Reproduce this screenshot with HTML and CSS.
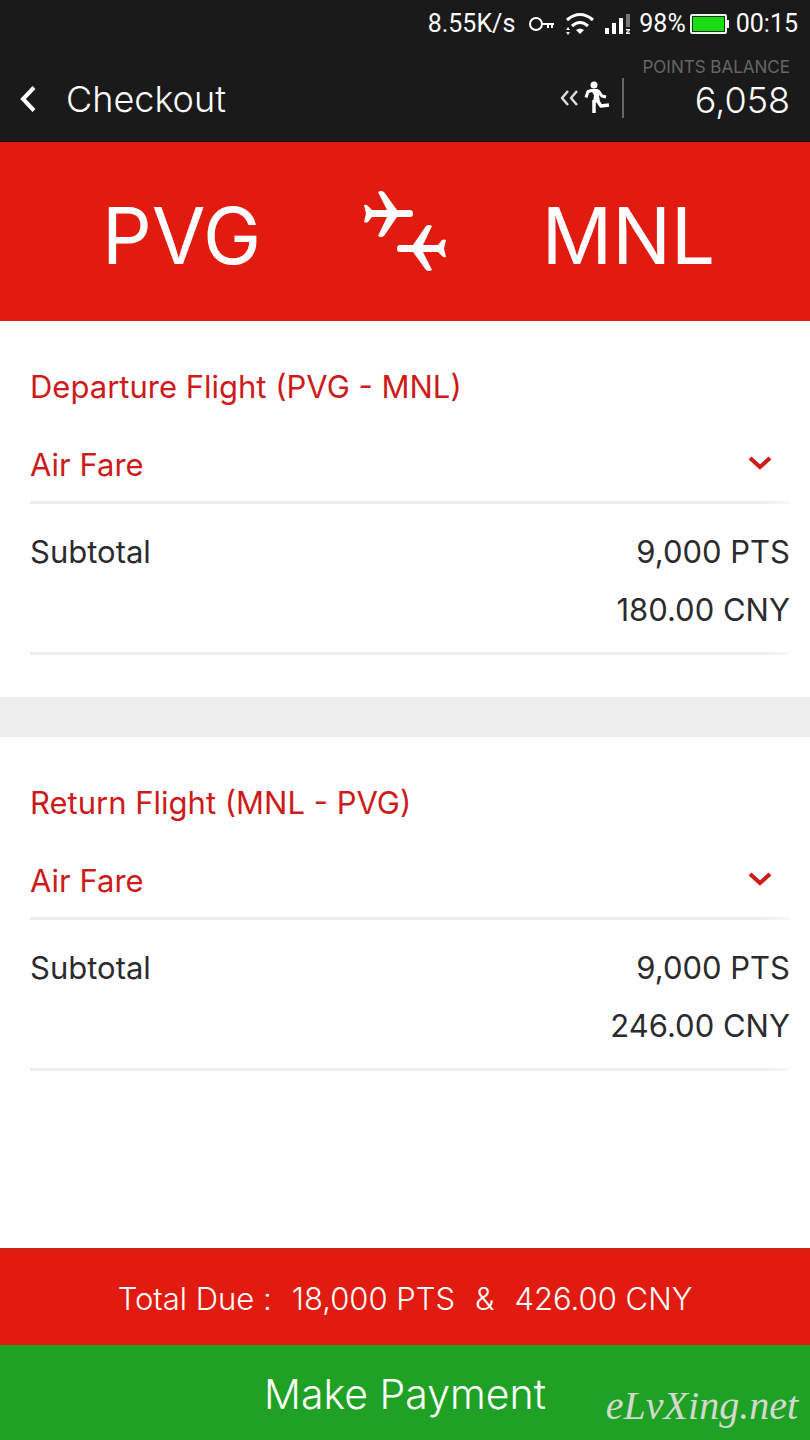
FILE: index.html
```html
<!DOCTYPE html>
<html lang="en">
<head>
<meta charset="utf-8">
<meta name="viewport" content="width=device-width, initial-scale=1">
<title>Checkout</title>
<link rel="stylesheet" href="styles.css">
</head>
<body>
<div class="status-bar">
  <span class="status-speed">8.55K/s</span>
  <svg width="26" height="16" viewBox="0 0 26 16" fill="none" stroke="#fff" stroke-width="2" aria-hidden="true"><circle cx="7" cy="8" r="6"/><path d="M13 8h12M19 8v4M23 8v4"/></svg>
  <svg class="status-wifi" width="30" height="24" viewBox="0 0 30 24" fill="none" stroke="#fff" stroke-width="3" aria-hidden="true"><path d="M2 8Q15-3 28 8"/><path d="M7 14Q15 7 23 14"/><path d="M11 18Q15 15 19 18L15 22z" fill="#fff" stroke="none"/><path d="M1 18l2-3 2 3zM1 20h4l-2 3z" fill="#fff" stroke="none"/></svg>
  <svg class="status-signal" width="26" height="22" viewBox="0 0 26 22" fill="#fff" aria-hidden="true"><path d="M0 15h4v6H0zM7 10h4v11H7zM14 5h4v16h-4z"/><path d="M21 1h4v13h-4z" fill="#777"/><path d="M21 16h4v1.500l-2.500 2H25V21h-4v-1.500l2.500-2H21z"/></svg>
  <span class="status-level">98%</span>
  <svg width="40" height="20" viewBox="0 0 40 20" aria-hidden="true"><rect x="1" y="1" width="35" height="18" rx="1" fill="#15300f" stroke="#e9f5e9" stroke-width="2"/><rect x="3" y="3" width="31" height="14" fill="#1bdc14"/><path d="M37 6h2v8h-2z" fill="#e9f5e9"/></svg>
  <span class="status-time">00:15</span>
</div>
<header class="app-bar">
  <button class="back" type="button" aria-label="Back"><svg width="16" height="26" viewBox="0 0 16 26" fill="none" stroke="#fff" stroke-width="4"><path d="M14 1.500L3 13l11 11.500"/></svg></button>
  <h1 class="title">Checkout</h1>
  <svg class="runner" width="50" height="34" viewBox="0 0 50 34" fill="none" stroke="#fff" stroke-linejoin="round" aria-hidden="true"><path d="M8 10l-6 7 6 7M17 10l-6 7 6 7" stroke-width="2.500" stroke="#ddd"/><circle cx="34" cy="4" r="3.500" fill="#fff" stroke="none"/><path d="M30 8h8l3 3-2 4 1 6-7 1 1-8z" fill="#fff" stroke="none"/><path d="M32 9.500l-4 1-2 6M38 10l4 5 4 1" stroke-width="3"/><path d="M34 19v13M37 19l4 6 8-1" stroke-width="3.500"/></svg>
  <div class="balance">
    <span class="balance-label">POINTS BALANCE</span>
    <strong class="balance-value">6,058</strong>
  </div>
</header>
<div class="route">
  <span class="airport">PVG</span>
  <svg width="84" height="84" viewBox="0 0 84 84" fill="#fff" aria-hidden="true">
    <defs><path id="plane" d="M1 15q2-1 4 1l4 4h15L15 2q3-2 6 0l13 18h13q3 0 3 3.500t-3 3.500H34L21 46q-3 2-6 0l9-19H9l-4 5q-2 1-4 0l2-8.500z"/></defs>
    <use href="#plane"/><use href="#plane" transform="translate(84 82) rotate(180)"/>
  </svg>
  <span class="airport">MNL</span>
</div>
<main class="flights">
  <section class="flight">
    <h2 class="flight-title">Departure Flight (PVG - MNL)</h2>
    <button class="fare" type="button" aria-expanded="false"><span>Air Fare</span><svg width="24" height="18" viewBox="0 0 24 18" fill="none" stroke="#cd1a1a" stroke-width="4"><path d="M2 2l10 9L22 2"/></svg></button>
    <dl class="subtotal"><dt>Subtotal</dt><dd>9,000 PTS</dd><dd>180.00 CNY</dd></dl>
  </section>
  <section class="flight">
    <h2 class="flight-title">Return Flight (MNL - PVG)</h2>
    <button class="fare" type="button" aria-expanded="false"><span>Air Fare</span><svg width="24" height="18" viewBox="0 0 24 18" fill="none" stroke="#cd1a1a" stroke-width="4"><path d="M2 2l10 9L22 2"/></svg></button>
    <dl class="subtotal"><dt>Subtotal</dt><dd>9,000 PTS</dd><dd>246.00 CNY</dd></dl>
  </section>
</main>
<footer class="checkout">
  <p class="total"><span>Total Due :</span><span>18,000 PTS</span><span>&amp;</span><span>426.00 CNY</span></p>
  <button class="pay" type="button">Make Payment</button>
  <span class="watermark">eLvXing.net</span>
</footer>
</body>
</html>
```
FILE: styles.css
```css
* { box-sizing: border-box; }
body {
  margin: 0;
  min-height: 100vh;
  display: flex;
  flex-direction: column;
  background: #fff;
  color: #2b2b2f;
  font: 400 31px/36px Inter, "Liberation Sans", sans-serif;
}
h1, h2, p, dl, dd { margin: 0; font-weight: inherit; }
button { border: 0; padding: 0; background: none; color: inherit; font: inherit; cursor: pointer; }
svg { display: block; flex: none; }

.status-bar {
  display: flex;
  align-items: center;
  justify-content: flex-end;
  height: 48px;
  padding-right: 12px;
  background: #1a1a1a;
  color: #fff;
  font: 400 25px/32px Roboto, sans-serif;
}
.status-speed { margin-right: 14px; }
.status-wifi { margin: 0 10px; }
.status-level { margin: 0 4px 0 8px; }
.status-time { margin-left: 6px; }

.app-bar {
  display: flex;
  align-items: center;
  height: 94px;
  padding: 0 20px;
  background: #1a1a1a;
  color: #fff;
  border-bottom: 1px solid #111;
}
.back { margin-right: 30px; padding-top: 8px; }
.title { flex: 1; padding-top: 8px; font-size: 36px; line-height: 40px; font-weight: 300; }
.runner { margin-top: 6px; margin-right: 12px; }
.balance {
  display: flex;
  flex-direction: column;
  align-items: flex-end;
  padding: 0 0 10px 20px;
  background: linear-gradient(#666, #666) 0 60% / 2px 40px no-repeat;
}
.balance-label { color: #666; font-size: 17px; line-height: 21px; }
.balance-value { font-size: 36px; line-height: 44px; font-weight: 300; }

.route {
  display: grid;
  grid-template-columns: 1fr 84px 1fr;
  align-items: center;
  justify-items: center;
  height: 179px;
  background: #e21b10;
  color: #fff;
}
.airport { padding-top: 8px; font-size: 78px; line-height: 84px; font-weight: 400; }

.flights { flex: 1; }
.flight { padding: 48px 20px 42px 30px; }
.flight + .flight { border-top: 40px solid #ededed; }
.flight-title { color: #cd1a1a; font-size: 31px; font-weight: 400; }
.fare {
  display: flex;
  align-items: center;
  justify-content: space-between;
  width: 100%;
  padding: 42px 18px 18px 0;
  border-bottom: 3px solid;
  border-image: linear-gradient(to right, #ededed 96%, #fafafa) 3;
  color: #cd1a1a;
}
.subtotal {
  display: grid;
  grid-template-columns: 1fr auto;
  row-gap: 22px;
  padding: 30px 0 24px;
  border-bottom: 3px solid;
  border-image: linear-gradient(to right, #ededed 96%, #fafafa) 3;
}
.subtotal dd { grid-column: 2; text-align: right; }

.checkout { position: relative; color: #fff; }
.total {
  display: flex;
  justify-content: center;
  gap: 20px;
  padding: 32px 20px 28px;
  background: #e21b10;
  border-top: 1px solid #b92a20;
  font-size: 31px;
  font-weight: 300;
}
.pay { display: block; width: 100%; padding: 27px 20px 24px; background: #1fa125; font-size: 41px; line-height: 44px; font-weight: 300; }
.watermark {
  position: absolute;
  right: 12px;
  bottom: 12px;
  color: #d3d9d0;
  font: italic 40px/44px "Liberation Serif", serif;
  pointer-events: none;
}
```
